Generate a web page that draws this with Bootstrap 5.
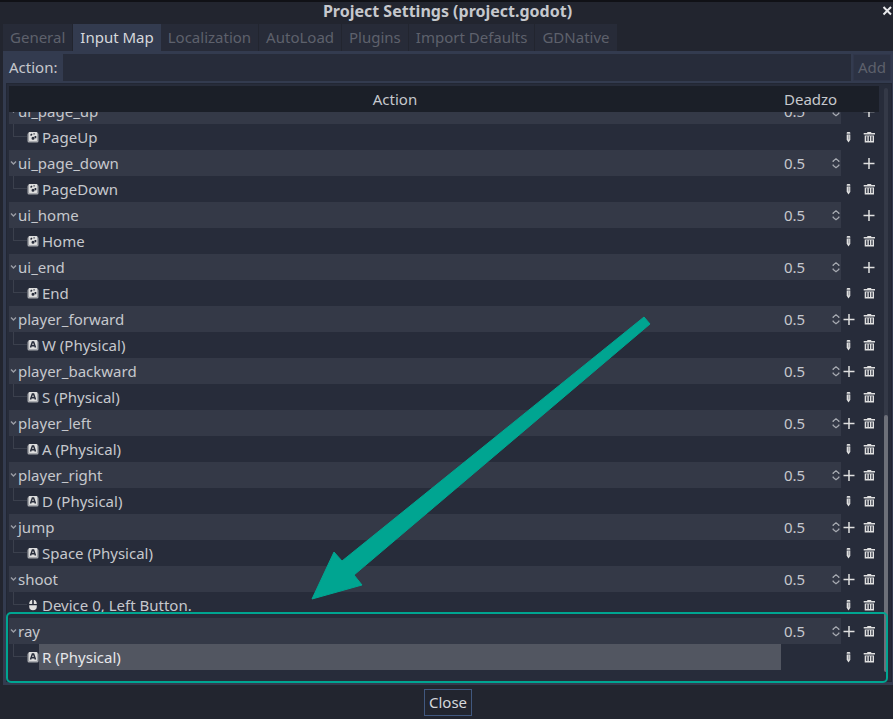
<!DOCTYPE html>
<html lang="en" data-bs-theme="dark">
<head>
<meta charset="utf-8">
<meta name="viewport" content="width=device-width, initial-scale=1">
<title>Project Settings (project.godot)</title>
<link href="https://cdn.jsdelivr.net/npm/bootstrap@5.3.0/dist/css/bootstrap.min.css" rel="stylesheet">
<style>
  body { font-family: "Noto Sans", sans-serif; font-size: 15px; line-height: 26px; color: #c6c8cd; background: #22252f; }
  button, input { font: inherit; color: inherit; }
  svg { display: block; }
  .window { border-top: 2px solid #101116; }
  .title-bar { height: 22px; padding-left: 2px; }
  .title-bar h1 { font-size: 16px; line-height: 18px; font-weight: 700; color: #c6c8cd; }
  .close-x { right: 0; top: 3px; color: #e8e9ec; }
  .tabs { padding-left: 3px; }
  .tabs .nav-link { margin-right: 1px; padding: 0 7px; height: 27px; line-height: 27px; border-radius: 0; color: #5e616c; background: #272b38; }
  .tabs .nav-link.active { margin-right: 0; color: #d6d8dc; background: #333b4f; }
  .panel { margin-left: 3px; background: #333b4f; padding: 3px 1px 3px 3px; }
  .action-bar { padding: 0 1px 0 3px; gap: 2px; margin-bottom: 2px; }
  .action-bar label { width: 52px; }
  .action-bar input { height: 27px; background: #272c3a; border: 0; }
  .action-bar .add { height: 27px; padding: 0 4px; color: #5e616c; background: #2c3243; border: 1px solid #30364a; }
  .tree { min-height: 0; background: #272c3a; border: 1px solid #222734; padding: 2px 0 0 2px; }
  .tree-scroll { overflow-y: auto; scrollbar-width: none; padding-bottom: 12px; }
  .tree-scroll::-webkit-scrollbar { display: none; }
  .map { width: 100%; table-layout: fixed; border-collapse: separate; border-spacing: 0; }
  .map th, .map td { padding: 0; height: 26px; font-weight: 400; }
  .map th { position: sticky; top: 0; z-index: 1; background: #1b1f28; }
  .col-zone { width: 60px; }
  .col-tools { width: 38px; }
  .map .zone { padding-left: 3px; }
  .action-row .filled { background: #343947; }
  .bare { border: 0; padding: 0; background: none; }
  .fold { width: 9px; }
  .zone input { width: 40px; padding: 0; border: 0; background: none; height: 26px; }
  .spin { margin-left: 8px; }
  .tool { height: 26px; display: flex; align-items: center; justify-content: center; width: 15px; color: #e0e0e0; }
  .tool.last { width: 20px; }
  .branch { width: 14px; height: 13px; margin: 0 0 13px 4px; border-left: 1px solid #3b404d; border-bottom: 1px solid #3b404d; }
  .event-icon { width: 12px; color: #e0e0e0; }
  .event-name { padding-left: 3px; }
  .selected .event-name { background: #525661; color: #e6e7ea; }
  .track { width: 12px; padding: 2px 3px 9px 5px; }
  .rail { width: 4px; background: #343947; border-radius: 2px; }
  .thumb { height: 44%; background: #6d7079; border-radius: 2px; }
  .mark-box { left: -1px; right: 3px; bottom: -2px; height: 71px; border: 2px solid #00a591; border-radius: 5px; pointer-events: none; z-index: 2; }
  .mark-arrow { right: 240px; bottom: 81px; pointer-events: none; }
  .footer-bar { padding: 4px 0 3px 3px; }
  .btn-close-window { height: 27px; line-height: 25px; padding: 0 4px; border: 1px solid #41587f; background: #22252f; color: #d6d8dc; }
</style>
</head>
<body>
<svg width="0" height="0" class="position-absolute" aria-hidden="true">
  <symbol id="i-fold" viewBox="0 0 8 8"><path d="M2 2.500 4.500 5 7 2.500" fill="none" stroke="#9a9da5" stroke-width="1.400"/></symbol>
  <symbol id="i-spin" viewBox="0 0 8 12"><path d="M1.200 5V4L4 1.800 6.800 4v1M1.200 7.500v1L4 10.700 6.800 8.500v-1" fill="none" stroke="#a9acb3" stroke-width="1.300"/></symbol>
  <symbol id="i-plus" viewBox="0 0 12 12"><path d="M6 1v11M.5 6.500h11" stroke="currentColor" stroke-width="1.500"/></symbol>
  <symbol id="i-pencil" viewBox="0 0 5 12"><path d="M1.600 1h1.800q.9 0 .9.900v.8H.7v-.8q0-.9.900-.9z" fill="currentColor"/><path d="M.7 3.500h3.600v5.200L2.500 11.500.7 8.700z" fill="currentColor"/><path d="M2.800 4.200v4.300" stroke="#7a7e87" stroke-width=".8"/></symbol>
  <symbol id="i-trash" viewBox="0 0 12 12"><path d="M4.500 1h3.500l.5 1H12v1.600H.7V2H4z" fill="currentColor"/><path fill-rule="evenodd" d="M1.700 4.500h9.300v7H1.700zM3.200 5.200v4.900h1.200V5.200zm2.600 0v4.900h1.200V5.200zm2.600 0v4.900h1.200V5.200z" fill="currentColor"/></symbol>
  <symbol id="i-key" viewBox="0 0 12 12"><path d="M.5 3.500Q.5 2.200 1.500 2V9Q1.500 10 2.500 10h7q1 0 1-1V2q1 .2 1 1.500v6.500q0 1.500-1.500 1.500H2Q.5 11.500.5 10z" fill="#a7a9ae"/><rect x="1.500" y="1" width="9" height="9" rx="1" fill="#dedede"/><path d="M3 4l1.500-1.500 1 1L4.200 5zM4.500 7.200a1.500 1.500 0 1 0 3 0 1.500 1.500 0 0 0-3 0M7.500 5h1.800v2.300H7.700zM6.500 2.300h1.200v1.200H6.500z" fill="#272c3a"/></symbol>
  <symbol id="i-phys" viewBox="0 0 12 12"><path d="M.5 3.500Q.5 2.200 1.500 2V9Q1.500 10 2.500 10h7q1 0 1-1V2q1 .2 1 1.500v6.500q0 1.500-1.500 1.500H2Q.5 11.500.5 10z" fill="#a7a9ae"/><rect x="1.500" y="1" width="9" height="9" rx="1" fill="#dedede"/><path d="M3.500 8.500 5.400 3h1.200l1.900 5.500M4.300 6.800h3.400" fill="none" stroke="#272c3a" stroke-width="1.500"/></symbol>
  <symbol id="i-mouse" viewBox="0 0 12 12"><path d="M2.200 5.100C2.200 2.800 3.300 1.100 5.200.7v4.400zM6.800.7C8.700 1.100 9.800 2.800 9.800 5.100h-3zM2.200 6.300h7.600v1.200a3.800 3.800 0 0 1-7.600 0z" fill="currentColor"/></symbol>
</svg>

<div class="window d-flex flex-column vh-100">
  <header class="title-bar position-relative text-center">
    <h1 class="m-0">Project Settings (project.godot)</h1>
    <button type="button" class="bare close-x position-absolute" aria-label="Close window"><svg width="12" height="12" viewBox="0 0 12 12"><path d="M2.500 2 10 9.500M10 2 2.500 9.500" stroke="currentColor" stroke-width="2"/></svg></button>
  </header>

  <nav class="tabs nav flex-nowrap" aria-label="Settings sections">
    <a class="nav-link" href="#general">General</a>
    <a class="nav-link active" href="#input-map" aria-current="page">Input Map</a>
    <a class="nav-link" href="#localization">Localization</a>
    <a class="nav-link" href="#autoload">AutoLoad</a>
    <a class="nav-link" href="#plugins">Plugins</a>
    <a class="nav-link" href="#import-defaults">Import Defaults</a>
    <a class="nav-link" href="#gdnative">GDNative</a>
  </nav>

  <main class="panel d-flex flex-column flex-grow-1 overflow-hidden">
    <form class="action-bar d-flex align-items-center">
      <label for="action-name">Action:</label>
      <input id="action-name" type="text" class="flex-grow-1">
      <button type="button" class="add d-flex align-items-center">Add</button>
    </form>
    <section class="tree position-relative d-flex flex-grow-1">
      <div class="tree-scroll flex-grow-1">
        <table class="map">
          <colgroup><col><col class="col-zone"><col class="col-tools"></colgroup>
          <thead><tr><th class="text-center" scope="col">Action</th><th class="zone" scope="col">Deadzo</th><th></th></tr></thead>
          <tbody id="rows"></tbody>
        </table>
      </div>
      <div class="track d-flex"><div class="rail d-flex flex-column justify-content-end"><div class="thumb"></div></div></div>
      <svg class="mark-arrow position-absolute" width="340" height="284" viewBox="0 0 340 284" aria-hidden="true"><path d="M333 1 339 8 43 259 51 269 1 283 23 236 31 245z" fill="#00a591" stroke="#00a591" stroke-width="1" stroke-linejoin="round"/></svg>
      <div class="mark-box position-absolute"></div>
    </section>
  </main>

  <footer class="footer-bar d-flex justify-content-center">
    <button type="button" class="btn-close-window">Close</button>
  </footer>
</div>

<script src="https://cdn.jsdelivr.net/npm/bootstrap@5.3.0/dist/js/bootstrap.bundle.min.js"></script>
<script>
  // [action, event, event icon, built-in action]
  const actions = [
    ['ui_page_up', 'PageUp', 'key', true],
    ['ui_page_down', 'PageDown', 'key', true],
    ['ui_home', 'Home', 'key', true],
    ['ui_end', 'End', 'key', true],
    ['player_forward', 'W (Physical)', 'phys'],
    ['player_backward', 'S (Physical)', 'phys'],
    ['player_left', 'A (Physical)', 'phys'],
    ['player_right', 'D (Physical)', 'phys'],
    ['jump', 'Space (Physical)', 'phys'],
    ['shoot', 'Device 0, Left Button.', 'mouse'],
    ['ray', 'R (Physical)', 'phys']
  ];
  const icon = (id, w, h) => `<svg width="${w}" height="${h}" aria-hidden="true"><use href="#i-${id}"/></svg>`;
  const tool = (id, w, label, last) => `<button type="button" class="bare tool ${last ? 'last' : ''}" aria-label="${label}">${icon(id, w, 12)}</button>`;
  document.getElementById('rows').innerHTML = actions.map(([name, event, kind, builtIn]) => `
    <tr class="action-row">
      <td class="filled"><div class="d-flex align-items-center"><button type="button" class="bare fold" aria-label="Collapse ${name}">${icon('fold', 8, 8)}</button><span>${name}</span></div></td>
      <td class="filled zone"><div class="d-flex align-items-center"><input type="text" value="0.5" aria-label="Deadzone of ${name}"><button type="button" class="bare spin" aria-label="Change deadzone of ${name}">${icon('spin', 8, 12)}</button></div></td>
      <td><div class="d-flex justify-content-between">${builtIn ? '<span></span>' + tool('plus', 12, 'Add event to ' + name, true) : tool('plus', 12, 'Add event to ' + name) + tool('trash', 12, 'Delete ' + name, true)}</div></td>
    </tr>
    <tr class="${name === 'ray' ? 'selected' : ''}">
      <td><div class="d-flex align-items-center"><span class="branch"></span><span class="event-icon">${icon(kind, 12, 12)}</span><span class="event-name flex-grow-1">${event}</span></div></td>
      <td></td>
      <td><div class="d-flex justify-content-between">${tool('pencil', 5, 'Edit ' + event)}${tool('trash', 12, 'Delete ' + event, true)}</div></td>
    </tr>`).join('');
  document.querySelector('.tree-scroll').scrollTop = 14;
</script>
</body>
</html>
